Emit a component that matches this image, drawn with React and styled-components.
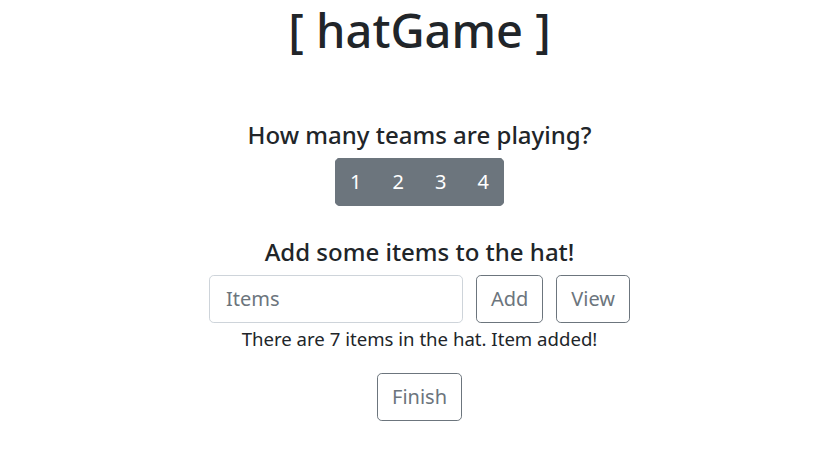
import React, { useState } from "react";
import styled, { createGlobalStyle, css } from "styled-components";

const GlobalStyle = createGlobalStyle`
  * { box-sizing: border-box; }
  body {
    margin: 0;
    background: #fff;
    color: #212529;
    font-family: "Noto Sans", "Open Sans", sans-serif;
  }
`;

const Page = styled.div`
  display: flex;
  flex-direction: column;
  align-items: center;
  padding-top: 1px;
`;

const Title = styled.h1`
  margin: 0;
  font-size: 47px;
  font-weight: 500;
  line-height: 1.25;
`;

const Section = styled.section`
  display: flex;
  flex-direction: column;
  align-items: center;
  margin-top: ${({ $top }) => $top}px;
`;

const Heading = styled.h4`
  margin: 0 0 ${({ $gap }) => $gap}px;
  font-size: 24px;
  font-weight: 500;
  line-height: 1.2;
`;

const ButtonGroup = styled.div`
  display: inline-flex;
  border-radius: 4.8px;
  overflow: hidden;
`;

const lgButton = css`
  font-family: inherit;
  font-size: 20px;
  line-height: 1.5;
  padding: 8px 14px;
  border-radius: 4.8px;
  cursor: pointer;
`;

const TeamButton = styled.button`
  ${lgButton}
  padding: 8px 14.5px;
  border-radius: 0;
  border: 1px solid #6c757d;
  background: ${({ $active }) => ($active ? "#5a6268" : "#6c757d")};
  color: #fff;
`;

const OutlineButton = styled.button`
  ${lgButton}
  background: transparent;
  border: 1px solid #6c757d;
  color: #6c757d;
`;

const Row = styled.div`
  display: flex;
  gap: 13px;
`;

const ItemInput = styled.input`
  width: 254px;
  font-family: inherit;
  font-size: 20px;
  line-height: 1.5;
  padding: 8px 16px;
  border: 1px solid #ced4da;
  border-radius: 4.8px;
  color: #495057;
  &::placeholder { color: #6c757d; }
`;

const Status = styled.p`
  margin: 3px 0 20px;
  font-size: 18.6px;
  line-height: 1.45;
`;

export default function App() {
  const [teams, setTeams] = useState(null);
  return (
    <Page>
      <GlobalStyle />
      <Title>[ hatGame ]</Title>
      <Section $top={61}>
        <Heading $gap={8}>How many teams are playing?</Heading>
        <ButtonGroup>
          {[1, 2, 3, 4].map((n) => (
            <TeamButton key={n} $active={teams === n} onClick={() => setTeams(n)}>
              {n}
            </TeamButton>
          ))}
        </ButtonGroup>
      </Section>
      <Section $top={32}>
        <Heading $gap={9}>Add some items to the hat!</Heading>
        <Row>
          <ItemInput placeholder="Items" />
          <OutlineButton>Add</OutlineButton>
          <OutlineButton>View</OutlineButton>
        </Row>
        <Status>There are 7 items in the hat. Item added!</Status>
        <OutlineButton>Finish</OutlineButton>
      </Section>
    </Page>
  );
}
